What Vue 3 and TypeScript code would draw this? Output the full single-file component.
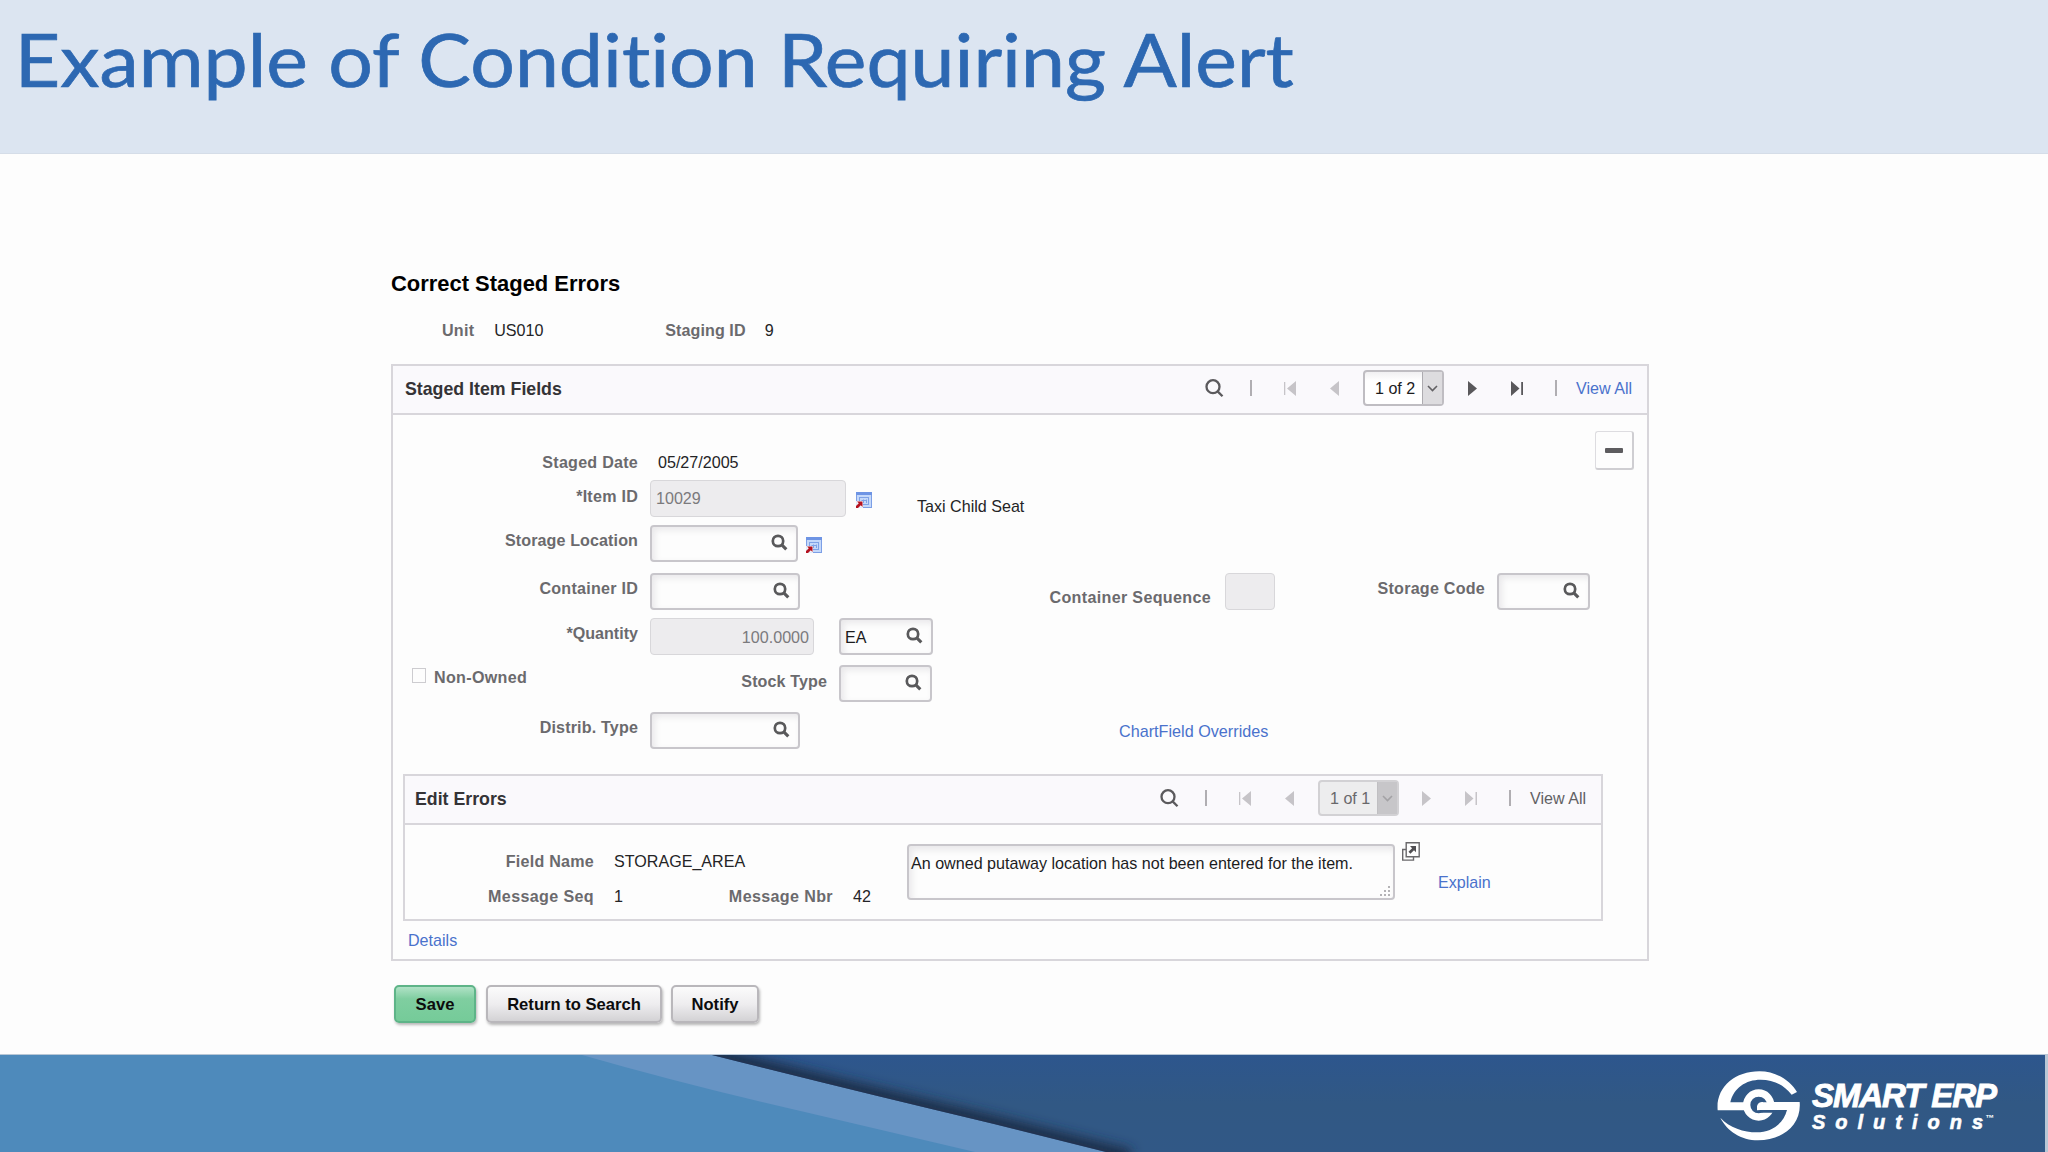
<script setup lang="ts">
import { h, ref } from 'vue'

interface Pager {
  label: string
  atEnd: boolean
}

const stagedPager: Pager = { label: '1 of 2', atEnd: false }
const errorPager: Pager = { label: '1 of 1', atEnd: true }

const storageLocation = ref('')
const containerId = ref('')
const storageCode = ref('')
const unitOfMeasure = ref('EA')
const stockType = ref('')
const distribType = ref('')
const message = ref('An owned putaway location has not been entered for the item.')

// Bold magnifier used inside the lookup fields
const Lookup = () =>
  h('svg', { class: 'lookup', viewBox: '0 0 17 17', width: 17, height: 17 }, [
    h('circle', { cx: 7, cy: 7, r: 5.2, fill: 'none', stroke: '#59595b', 'stroke-width': 2.7 }),
    h('path', { d: 'M10.8 10.8L15.3 15.4', stroke: '#59595b', 'stroke-width': 3.1 }),
  ])

const Related = () =>
  h('svg', { class: 'related', viewBox: '0 0 16 16', width: 16, height: 16 }, [
    h('rect', { x: 0.5, y: 0.5, width: 15, height: 15, fill: '#c4d8fa', stroke: '#7c9fe6' }),
    h('rect', { x: 0, y: 0, width: 16, height: 3, fill: '#6e94e4' }),
    h('path', { d: 'M3 5.5h10M3.5 5v6M12.5 5v8M5 12.5h8M5.5 8.5h5M7.5 7.5v3.5M10.5 7.5v3.5', stroke: '#7fa2e6', fill: 'none' }),
    h('path', { d: 'M0 9h7v7H0z', fill: '#fff', opacity: 0.8 }),
    h('path', { d: 'M1 9.5h5.5V15L4.8 13.300L2 16H0v-2L2.800 11.200z', fill: '#b5121f' }),
  ])
</script>

<template>
  <div class="slide">
    <header class="banner"><h1>Example of Condition Requiring Alert</h1></header>

    <main class="page">
      <h2>Correct Staged Errors</h2>
      <div class="keys">
        <b>Unit</b><span class="unit">US010</span><b class="staging">Staging ID</b><span>9</span>
      </div>

      <section class="panel">
        <div class="panel-head">
          <h3>Staged Item Fields</h3>
          <div class="pager">
            <svg class="find" width="19" height="19" viewBox="0 0 19 19"><circle cx="8" cy="7.700" r="6.500" /><path d="M12.600 12.400L17.500 17.300" /></svg>
            <i class="bar"></i>
            <svg class="arrow off first" width="12" height="15" viewBox="0 0 12 15"><path d="M0 1h1.300v13H0zM12 0v15L3 7.500z" /></svg>
            <svg class="arrow off prev" width="9" height="15" viewBox="0 0 9 15"><path d="M9 0v15L0 7.500z" /></svg>
            <span class="picker">{{ stagedPager.label }}<i><svg width="11" height="7" viewBox="0 0 11 7"><path d="M1 1l4.500 4.500L10 1" /></svg></i></span>
            <svg class="arrow next" :class="{ off: stagedPager.atEnd }" width="9" height="15" viewBox="0 0 9 15"><path d="M0 0v15l9-7.500z" /></svg>
            <svg class="arrow last" :class="{ off: stagedPager.atEnd }" width="12" height="15" viewBox="0 0 12 15"><path d="M0 0v15l8.500-7.500zM10.200 1H12v13h-1.800z" /></svg>
            <i class="bar end"></i>
            <a class="all">View All</a>
          </div>
        </div>

        <div class="row date">
          <label>Staged Date</label><span class="value">05/27/2005</span>
          <button class="minus" aria-label="Delete row"></button>
        </div>
        <div class="row item">
          <label>*Item ID</label><span class="box ro w196">10029</span><Related />
          <span class="descr">Taxi Child Seat</span>
        </div>
        <div class="row location">
          <label>Storage Location</label>
          <span class="box w148"><input v-model="storageLocation" /><Lookup /></span><Related />
        </div>
        <div class="row container">
          <label>Container ID</label>
          <span class="box w150"><input v-model="containerId" /><Lookup /></span>
          <label class="seq">Container Sequence</label><span class="box ro w50"></span>
          <label class="code">Storage Code</label>
          <span class="box w93"><input v-model="storageCode" /><Lookup /></span>
        </div>
        <div class="row quantity">
          <label>*Quantity</label><span class="box ro num w164">100.0000</span>
          <span class="box w94 uom"><input v-model="unitOfMeasure" /><Lookup /></span>
        </div>
        <div class="row owned">
          <span class="check"></span><label class="non">Non-Owned</label>
          <label class="stock">Stock Type</label>
          <span class="box w93"><input v-model="stockType" /><Lookup /></span>
        </div>
        <div class="row distrib">
          <label>Distrib. Type</label>
          <span class="box w150"><input v-model="distribType" /><Lookup /></span>
          <a class="chart">ChartField Overrides</a>
        </div>

        <section class="panel inner">
          <div class="panel-head">
            <h3>Edit Errors</h3>
            <div class="pager">
              <svg class="find" width="19" height="19" viewBox="0 0 19 19"><circle cx="8" cy="7.700" r="6.500" /><path d="M12.600 12.400L17.500 17.300" /></svg>
              <i class="bar"></i>
              <svg class="arrow off first" width="12" height="15" viewBox="0 0 12 15"><path d="M0 1h1.300v13H0zM12 0v15L3 7.500z" /></svg>
              <svg class="arrow off prev" width="9" height="15" viewBox="0 0 9 15"><path d="M9 0v15L0 7.500z" /></svg>
              <span class="picker disabled">{{ errorPager.label }}<i><svg width="11" height="7" viewBox="0 0 11 7"><path d="M1 1l4.500 4.500L10 1" /></svg></i></span>
              <svg class="arrow next" :class="{ off: errorPager.atEnd }" width="9" height="15" viewBox="0 0 9 15"><path d="M0 0v15l9-7.500z" /></svg>
              <svg class="arrow last" :class="{ off: errorPager.atEnd }" width="12" height="15" viewBox="0 0 12 15"><path d="M0 0v15l8.500-7.500zM10.500 1H12v13h-1.500z" /></svg>
              <i class="bar end"></i>
              <span class="all muted">View All</span>
            </div>
          </div>
          <div class="error">
            <dl>
              <dt>Field Name</dt><dd class="wide">STORAGE_AREA</dd>
              <dt class="msg">Message Seq</dt><dd>1</dd><dt class="msg">Message Nbr</dt><dd>42</dd>
            </dl>
            <div class="message">
              <span>{{ message }}</span>
              <svg class="grip" width="10" height="10" viewBox="0 0 10 10"><path d="M8 0h2v2H8zM4 4h2v2H4zM8 4h2v2H8zM0 8h2v2H0zM4 8h2v2H4zM8 8h2v2H8z" fill="#b4b3b6" /></svg>
            </div>
            <svg class="expand" width="18" height="19" viewBox="0 0 18 19">
              <path d="M3.500 7.500H.700v10.600h10.800V15.500M4.200.700h13v14h-13z" fill="none" stroke="#69686b" stroke-width="1.400" />
              <path d="M8 4h6v6.200l-2-2-3.600 3.500-1.900-1.900L10.100 6.200z" fill="#4f4e51" />
            </svg>
            <a class="explain">Explain</a>
          </div>
        </section>
        <a class="details">Details</a>
      </section>

      <div class="actions">
        <button class="save">Save</button><button class="return">Return to Search</button><button class="notify">Notify</button>
      </div>
    </main>

    <footer class="foot">
      <svg class="sweep" width="2048" height="98" viewBox="0 1054 2048 98" preserveAspectRatio="none">
        <defs>
          <linearGradient id="deep" x1="0" y1="0" x2="0" y2="1">
            <stop offset="0" stop-color="#2d568d" /><stop offset=".5" stop-color="#315884" /><stop offset="1" stop-color="#315886" />
          </linearGradient>
          <filter id="soft" x="-10%" y="-60%" width="120%" height="220%"><feGaussianBlur stdDeviation="6" /></filter>
          <clipPath id="right"><path d="M712 1055Q850 1090 994 1124L1106 1152H2046V1055z" /></clipPath>
        </defs>
        <path d="M0 1054H2048V1152H0z" fill="#b8c7d6" />
        <path d="M0 1055H1200V1152H0z" fill="#4e8abb" />
        <path d="M582 1055Q690 1086 809 1113L975 1152H1120L712 1055z" fill="#6794c4" />
        <path d="M712 1055Q850 1090 994 1124L1106 1152H2045V1055z" fill="url(#deep)" />
        <g clip-path="url(#right)"><path d="M690 1050Q850 1090 994 1124L1130 1158" fill="none" stroke="#1f2e48" stroke-width="17" filter="url(#soft)" /></g>
      </svg>
      <div class="brand">
        <svg width="83" height="70" viewBox="110 92 249 210">
          <g fill="#fff">
            <path d="M112 210C106 142 162 93 237 93C288 93 330 121 350 155L334 163C310 133 278 118 241 118C196 118 160 143 150 186H196V210z" />
            <path d="M358 185C364 253 308 300 233 300C182 300 140 272 120 232C146 262 192 276 229 276C274 276 310 250 320 209H270V185z" />
          </g>
          <circle cx="235" cy="194" r="36" fill="#315886" stroke="#fff" stroke-width="22" />
          <path d="M230 210V197C234 184 246 184 249 186H282V209H240z" fill="#fff" />
          <path d="M240 209H290L283 217H244z" fill="#315886" />
        </svg>
        <div class="brand-text">
          <b>SMART ERP</b>
          <div class="brand-sub"><span>Solution<em>s</em></span><small>™</small></div>
        </div>
      </div>
    </footer>
  </div>
</template>

<style>
body { margin: 0; background: #fdfdfd; }
</style>

<style scoped>
* { box-sizing: border-box; }
.slide {
  width: 2048px; height: 1152px; overflow: hidden; display: flex; flex-direction: column;
  background: #fdfdfd; font: 16.1px/20px "Liberation Sans", Arial, sans-serif; color: #242426;
}
h1, h2, h3, dl, dd { margin: 0; }
a { color: #4a72cc; }
i { font-style: normal; }
.banner { flex: none; height: 154px; background: #dce5f1; border-bottom: 1px solid #d5dde8; }
h1 {
  width: max-content; padding: 13px 0 0 14px; font: 400 74.500px/90px Lato, sans-serif; color: #2d68b2;
  font-variant-ligatures: none; white-space: nowrap; transform: scaleX(1.058); transform-origin: 0 0;
  -webkit-text-stroke: .7px #2d68b2;
}
.page { flex: none; height: 900px; padding: 117px 0 0 391px; }
h2 { font-size: 21.950px; line-height: 26px; color: #000; }
.keys { display: flex; height: 44px; margin: 23px 0 0 51px; }
.keys b, label, dt { font-weight: 700; letter-spacing: .24px; color: #6b6a6d; }
.keys b { margin-right: 20px; }
.keys .unit { width: 171px; }
.keys .staging { margin-right: 19px; letter-spacing: .08px; }

.panel { width: 1258px; height: 597px; border: 2px solid #d8d6db; }
.page > .panel { margin-bottom: 24px; }
.panel-head { display: flex; justify-content: space-between; height: 49px; background: #faf9fc; border-bottom: 2px solid #d8d6db; }
h3 { padding: 13px 0 0 12px; font-size: 17.750px; line-height: 20px; color: #343336; }
.pager { display: flex; align-items: center; height: 44px; margin-right: 14px; }
.find { fill: none; stroke: #5b5a5d; stroke-width: 2.300; }
.bar { width: 2px; height: 16px; margin: 0 32px 0 26px; background: #b0aeb2; }
.arrow { fill: #59585b; }
.arrow.off { fill: #c6c4c8; }
.first { margin-right: 34px; }
.prev { margin-right: 24px; }
.picker {
  display: flex; width: 81px; height: 36px; margin-right: 24px; padding-left: 10px; line-height: 33px; color: #1c1c1e;
  border: 2px solid #bfbdc2; border-radius: 4px; background: linear-gradient(#f1f0f2, #fff 9px);
}
.picker i { display: flex; align-items: center; justify-content: center; width: 20px; margin-left: auto; background: #dddcdf; border-left: 1px solid #adabb0; }
.picker i svg { fill: none; stroke: #626164; stroke-width: 1.600; }
.picker.disabled { margin-right: 23px; color: #69686b; background: #ededee; border-color: #d2d1d4; }
.picker.disabled i { background: #c7c6c9; border-color: #c0bfc2; }
.picker.disabled i svg { stroke: #a3a2a5; }
.next { margin-right: 34px; }
.bar.end { margin: 0 19px 0 32px; }
.all { width: 57px; white-space: nowrap; }
.muted { color: #626164; }

.row { display: flex; align-items: flex-start; }
label { flex: none; width: 245px; margin-right: 12px; text-align: right; white-space: nowrap; }
.date { height: 65px; }
.date label { padding-top: 37px; }
.value { width: 945px; padding: 37px 0 0 8px; }
.minus { position: relative; width: 39px; height: 39px; margin-top: 16px; padding: 0; background: #fdfdfd; border: 1px solid #dddce0; border-right: 2px solid #cfced2; border-bottom: 2px solid #cfced2; border-radius: 3px; }
.minus::after { content: ""; display: block; width: 18px; height: 5px; margin: 0 auto; border-radius: 1px; background: #5d5c5f; }
.item { height: 45px; }
.item label { padding-top: 6px; }
.item .related { margin: 12px 0 0 10px; }
.descr { padding: 16px 0 0 45px; }
.location { height: 48px; }
.location label { padding-top: 5px; letter-spacing: .1px; }
.location .related { margin: 12px 0 0 8px; }
.container { height: 45px; }
.container label { padding-top: 5px; }
.container .seq { width: 411px; padding-top: 14px; margin-right: 14px; letter-spacing: .33px; }
.container .code { width: 210px; }
.quantity { height: 47px; }
.quantity label { padding-top: 5px; letter-spacing: 0; }
.uom { margin-left: 25px; }
.owned { height: 47px; }
.check { width: 14px; height: 15px; margin: 3px 8px 0 19px; border: 1px solid #cdccd0; }
.non { width: 92px; padding-top: 2px; margin: 0; text-align: left; letter-spacing: .32px; }
.stock { width: 301px; padding-top: 6px; margin-right: 12px; letter-spacing: .1px; }
.distrib { height: 62px; }
.distrib label { padding-top: 5px; letter-spacing: .16px; }
.chart { padding: 9px 0 0 319px; font-size: 16.200px; }

.box {
  flex: none; display: flex; height: 37px; padding: 0 8px 0 4px; border: 2px solid #c8c6cb; border-radius: 4px;
  background: #fdfdfd; box-shadow: inset 3px 3px 6px rgba(90, 85, 100, .12);
}
.box input { flex: 1; min-width: 0; padding: 0; border: 0; outline: 0; background: none; font: inherit; color: #1c1c1e; }
.box .lookup { margin-top: 7px; }
.ro { border: 1px solid #d8d7da; background: #edecee; box-shadow: none; color: #7b7a7d; line-height: 35px; padding-left: 5px; }
.num { justify-content: flex-end; padding-right: 4px; line-height: 36px; }
.w50 { width: 50px; }
.w93 { width: 93px; }
.w94 { width: 94px; }
.w148 { width: 148px; }
.w150 { width: 150px; }
.w164 { width: 164px; }
.w196 { width: 196px; }

.inner { width: 1200px; height: 147px; margin-left: 10px; }
.inner h3 { padding-left: 10px; }
.error { display: flex; align-items: flex-start; padding-top: 19px; }
dl { display: grid; grid-template-columns: 189px 115px 124px 74px; row-gap: 15px; padding-top: 7px; }
dt { text-align: right; }
dt.msg { letter-spacing: .36px; }
dd { padding-left: 20px; }
.wide { grid-column: span 3; }
.message {
  position: relative; width: 488px; height: 56px; padding: 7px 2px; color: #1c1c1e; white-space: nowrap;
  border: 2px solid #c8c6cb; border-radius: 4px; box-shadow: inset 3px 4px 6px rgba(90, 85, 100, .12);
}
.grip { position: absolute; right: 3px; bottom: 2px; }
.expand { margin: -2px 18px 0 7px; }
.explain { padding-top: 28px; }
.details { display: block; margin: 9px 0 0 15px; }

.actions { display: flex; margin-left: 3px; }
.actions button {
  height: 38px; padding: 2px 0 0; font: 700 16.600px/32px "Liberation Sans", Arial, sans-serif; color: #0c0c0d;
  border: 2px solid #b9b7bb; border-radius: 5px; background: linear-gradient(#fbfbfb, #eeedef 50%, #d3d2d5);
  box-shadow: 1px 2px 3px rgba(0, 0, 0, .28);
}
.actions .save { width: 82px; margin-right: 10px; border-color: #5eb488; background: linear-gradient(#b0e2c6, #7fcea0 35%, #75cb99); }
.actions .return { width: 176px; margin-right: 9px; }
.actions .notify { width: 88px; }

.foot { position: relative; flex: none; height: 98px; }
.sweep { display: block; }
.brand { position: absolute; left: 1717px; top: 17px; display: flex; color: #fff; }
.brand-text { display: flex; flex-direction: column; padding: 8px 0 0 12px; font-style: italic; font-weight: 700; white-space: nowrap; }
.brand-text b { font-size: 33px; line-height: 34px; letter-spacing: -1.100px; -webkit-text-stroke: .9px #fff; }
.brand-sub { display: flex; align-items: flex-start; }
.brand-sub span { font-size: 20px; line-height: 18px; letter-spacing: 10px; -webkit-text-stroke: .6px #fff; }
.brand-sub em { letter-spacing: 0; }
.brand-sub small { margin-left: 2px; font-size: 9px; line-height: 10px; }
</style>
